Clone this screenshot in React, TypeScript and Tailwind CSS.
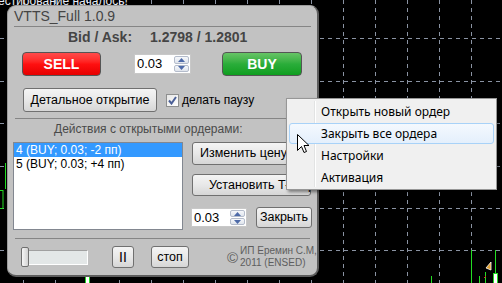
const winFace =
  "flex shrink-0 items-center whitespace-nowrap rounded-[3px] border border-[#707070] bg-gradient-to-b from-[#f4f4f4] via-[#e8e8e8] to-[#d6d6d6] text-[12.5px] text-black";
const winBtn = `${winFace} justify-center`;

function ChartGrid() {
  const xs = Array.from({ length: 15 }, (_, i) => 23 + i * 32);
  const ys = [38, 81, 123, 166, 208, 250];
  return (
    <svg className="absolute inset-0" width="502" height="283">
      {xs.map((x) => (
        <line key={"v" + x} x1={x + 0.5} y1={0} x2={x + 0.5} y2={283} stroke="#8a93a3" strokeDasharray="4 4" />
      ))}
      {ys.map((y) => (
        <line key={"h" + y} x1={0} y1={y + 0.5} x2={502} y2={y + 0.5} stroke="#8a93a3" strokeDasharray="4 4" />
      ))}
      {/* candles */}
      <line x1="5.5" y1="163" x2="5.5" y2="189" stroke="#22dd22" />
      <rect x="-1" y="190.5" width="4" height="18" fill="none" stroke="#22dd22" />
      <rect x="85.5" y="276.5" width="4" height="8" fill="#fff" stroke="#22dd22" />
      <line x1="431.5" y1="276" x2="431.5" y2="283" stroke="#22dd22" />
      <line x1="471.5" y1="250" x2="471.5" y2="283" stroke="#22dd22" />
      <line x1="479.5" y1="276" x2="479.5" y2="283" stroke="#22dd22" />
      <line x1="485.5" y1="272" x2="485.5" y2="283" stroke="#22dd22" />
      <line x1="495.5" y1="250" x2="495.5" y2="283" stroke="#22dd22" />
      <rect x="493.5" y="273.5" width="4" height="10" fill="#fff" stroke="#22dd22" />
      <path d="M486 268 L491 262 L491 270 Z" fill="#e0a030" stroke="#fff" strokeWidth="0.8" />
      <line x1="484" y1="278" x2="486" y2="276" stroke="#e02020" />
    </svg>
  );
}

function Spinner() {
  return (
    <div className="flex w-[16px] shrink-0 flex-col gap-px py-px pr-px">
      <div className="flex flex-1 items-center justify-center rounded-[2px] border border-[#b4bccb] bg-gradient-to-b from-[#f6f8fb] to-[#dfe4ec]">
        <svg width="7" height="4" viewBox="0 0 7 4">
          <path d="M0 4 L3.5 0 L7 4 Z" fill="#4d6aa8" />
        </svg>
      </div>
      <div className="flex flex-1 items-center justify-center rounded-[2px] border border-[#b4bccb] bg-gradient-to-b from-[#f6f8fb] to-[#dfe4ec]">
        <svg width="7" height="4" viewBox="0 0 7 4">
          <path d="M0 0 L3.5 4 L7 0 Z" fill="#4d6aa8" />
        </svg>
      </div>
    </div>
  );
}

function QtyInput({ w, h }: { w: string; h: string }) {
  return (
    <div className={`flex shrink-0 ${w} ${h} border border-[#c8c8c8] bg-white`}>
      <div className="flex flex-1 items-center pl-[2px] text-[13px] text-black">0.03</div>
      <Spinner />
    </div>
  );
}

function Panel() {
  return (
    <div className="absolute left-[7px] top-[5px] flex h-[272px] w-[312px] flex-col rounded-[9px] border-b-2 border-l border-r-2 border-t border-b-[#5c5c5c] border-l-[#9c9c9c] border-r-[#5c5c5c] border-t-[#9c9c9c] bg-[#c2c2c2]">
      {/* title */}
      <div className="flex h-[20px] items-center pl-[6px] text-[14px] text-[#454545]">VTTS_Full 1.0.9</div>
      <div className="mx-[6px] h-px bg-[#858585]" />

      {/* bid / ask */}
      <div className="ml-[60px] flex h-[20px] items-center gap-[18px] text-[14px] font-bold text-[#454545]">
        <span>Bid / Ask:</span>
        <span>1.2798 / 1.2801</span>
      </div>

      {/* sell / qty / buy */}
      <div className="ml-[14px] mt-[5px] flex h-[24px] items-center">
        <div className="flex h-full w-[79px] shrink-0 items-center justify-center rounded-[4px] border border-[#555] bg-gradient-to-b from-[#ff4a4a] via-[#ff1010] to-[#e60000] text-[14px] font-bold text-white">
          SELL
        </div>
        <div className="ml-[33px]">
          <QtyInput w="w-[57px]" h="h-[20px]" />
        </div>
        <div className="ml-[31px] flex h-full w-[80px] shrink-0 items-center justify-center rounded-[4px] border border-[#555] bg-gradient-to-b from-[#66c466] via-[#2aad3a] to-[#0c9e1e] text-[14px] font-bold text-white">
          BUY
        </div>
      </div>

      {/* detailed open */}
      <div className="ml-[15px] mt-[12px] flex h-[24px] items-center">
        <div className={`${winBtn} h-full w-[134px]`}>
          <span>
            <span className="underline">Д</span>етальное открытие
          </span>
        </div>
        <div className="ml-[9px] flex h-[13px] w-[13px] shrink-0 items-center justify-center border border-[#8e8f8f] bg-gradient-to-br from-[#e6e6e6] to-white">
          <svg width="9" height="9" viewBox="0 0 9 9">
            <path d="M1 4.5 L3.5 7.5 L8 1" fill="none" stroke="#4a5f97" strokeWidth="2" />
          </svg>
        </div>
        <span className="ml-[3px] whitespace-nowrap text-[12px] text-black">делать паузу</span>
      </div>

      <div className="mx-[7px] mt-[6px] h-px bg-[#858585]" />

      <div className="ml-[46px] mt-[2px] flex h-[16px] items-center whitespace-nowrap text-[12px] text-[#4a4a4a]">
        Действия с открытыми ордерами:
      </div>

      {/* orders */}
      <div className="ml-[5px] mt-[5px] flex">
        <div className="flex h-[88px] w-[170px] shrink-0 flex-col border border-[#828790] bg-white text-[12px] text-black">
          <div className="flex h-[14px] items-center whitespace-nowrap bg-[#3399ff] pl-[2px] text-white">4 (BUY; 0.03; -2 пп)</div>
          <div className="flex h-[14px] items-center whitespace-nowrap pl-[2px]">5 (BUY; 0.03; +4 пп)</div>
        </div>
        <div className="ml-[9px] flex w-[119px] shrink-0 flex-col">
          <div className={`${winFace} h-[23px] w-[119px] pl-[7px]`}>Изменить цену/SL/TP</div>
          <div className={`${winFace} mt-[9px] h-[22px] w-[119px] pl-[16px]`}>Установить T-Stop</div>
          <div className="mt-[11px] flex h-[21px] items-center">
            <div className="-ml-px">
              <QtyInput w="w-[56px]" h="h-[19px]" />
            </div>
            <div className={`${winBtn} ml-[9px] h-full w-[56px]`}>Закрыть</div>
          </div>
        </div>
      </div>

      <div className="mx-[7px] mt-[8px] h-px bg-[#858585]" />

      {/* bottom controls */}
      <div className="ml-[13px] mt-[7px] flex h-[22px] items-center">
        <div className="relative flex h-[20px] w-[67px] shrink-0 items-center">
          <div className="h-[15px] w-full border border-b-white border-l-[#a0a0a0] border-r-white border-t-[#a0a0a0] bg-[#e3e7e7]" />
          <div className="absolute left-0 top-0 h-[20px] w-[8px] rounded-[2px] border border-[#707070] bg-gradient-to-r from-[#f6f6f6] to-[#d2d2d2]" />
        </div>
        <div className={`${winBtn} ml-[24px] h-full w-[22px] text-[14px]`}>II</div>
        <div className={`${winBtn} ml-[17px] h-full w-[38px]`}>стоп</div>
        <div className="ml-[38px] flex shrink-0 items-center whitespace-nowrap text-[#5e5e5e]">
          <span className="text-[15px] leading-none">©</span>
          <div className="ml-[2px] flex flex-col text-[10px] leading-[12px]">
            <span>ИП Еремин С.М,</span>
            <span>2011 (ENSED)</span>
          </div>
        </div>
      </div>
    </div>
  );
}

function ContextMenu() {
  const items = ["Открыть новый ордер", "Закрыть все ордера", "Настройки", "Активация"];
  return (
    <div className="absolute left-[286px] top-[98px] flex h-[92px] w-[211px] flex-col border border-[#979797] bg-[#f0f0f0] pt-[2px] font-['Noto_Sans',sans-serif] text-[12px] text-black shadow-[2px_2px_3px_rgba(0,0,0,0.45)]">
      <div className="absolute bottom-[2px] left-[27px] top-[2px] w-px bg-[#e2e3e3]" />
      <div className="absolute bottom-[2px] left-[28px] top-[2px] w-px bg-white" />
      {items.map((t, i) => (
        <div key={t} className="flex h-[22px] px-[2px]">
          <div
            className={`relative flex h-[21px] flex-1 items-center rounded-[3px] border pl-[31px] ${
              i === 1 ? "border-[#a8d2f8] bg-gradient-to-b from-[#f4f9fe] to-[#e4effc]" : "border-transparent"
            }`}
          >
            {t}
          </div>
        </div>
      ))}
    </div>
  );
}

function Cursor() {
  return (
    <svg className="absolute left-[297px] top-[134px]" width="14" height="21" viewBox="0 0 14 21">
      <path d="M0.5 0.5 V16.5 L4.5 12.5 L7 18.5 L9.5 17.5 L7 11.5 H12 Z" fill="#fff" stroke="#000" strokeWidth="1" strokeLinejoin="miter" />
    </svg>
  );
}

export default function App() {
  return (
    <div className="relative h-[283px] w-[502px] overflow-hidden bg-black font-['Liberation_Sans',Arial,sans-serif]">
      <ChartGrid />
      <div className="absolute left-[-2px] top-[-8px] whitespace-nowrap text-[12px] text-[#e6ebf5]">естирование началось!</div>
      <Panel />
      <ContextMenu />
      <Cursor />
    </div>
  );
}
